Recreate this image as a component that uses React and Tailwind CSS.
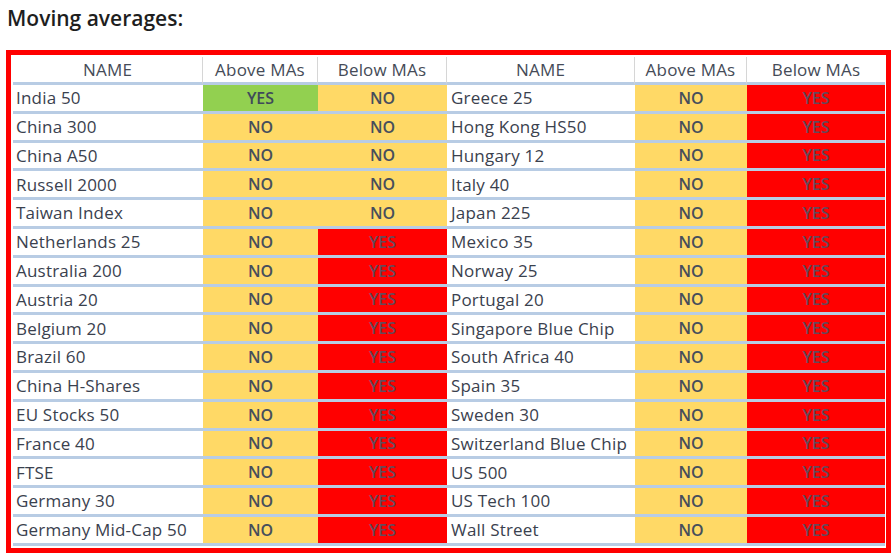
import React from 'react';

const left = [
  ['India 50', 'YES', 'NO'],
  ['China 300', 'NO', 'NO'],
  ['China A50', 'NO', 'NO'],
  ['Russell 2000', 'NO', 'NO'],
  ['Taiwan Index', 'NO', 'NO'],
  ['Netherlands 25', 'NO', 'YES'],
  ['Australia 200', 'NO', 'YES'],
  ['Austria 20', 'NO', 'YES'],
  ['Belgium 20', 'NO', 'YES'],
  ['Brazil 60', 'NO', 'YES'],
  ['China H-Shares', 'NO', 'YES'],
  ['EU Stocks 50', 'NO', 'YES'],
  ['France 40', 'NO', 'YES'],
  ['FTSE', 'NO', 'YES'],
  ['Germany 30', 'NO', 'YES'],
  ['Germany Mid-Cap 50', 'NO', 'YES'],
];

const right = [
  'Greece 25', 'Hong Kong HS50', 'Hungary 12', 'Italy 40', 'Japan 225', 'Mexico 35',
  'Norway 25', 'Portugal 20', 'Singapore Blue Chip', 'South Africa 40', 'Spain 35',
  'Sweden 30', 'Switzerland Blue Chip', 'US 500', 'US Tech 100', 'Wall Street',
];

const cell = "h-[28.8px] border-b-[3px] border-[#b8cce4] flex items-center";
const headCell = "h-[28px] border-b-[3px] border-[#b8cce4] border-r border-r-[#d6d6d6] flex items-center justify-center text-[17px] tracking-[0.2px] text-[#454b57] bg-white";
const nameCls = `${cell} text-[17px] tracking-[0.2px] text-[#3a414e] bg-white`;

// above MAs: YES -> green, NO -> yellow
const aboveCls = v => v === 'YES'
  ? `${cell} justify-center text-[16px] bg-[#92d050] font-semibold text-[#3f4a5a]`
  : `${cell} justify-center text-[16px] bg-[#ffd966] font-semibold text-[#464e5c]`;

// below MAs: YES -> red, NO -> yellow
const belowCls = v => v === 'YES'
  ? `${cell} justify-center text-[16px] bg-[#ff0000] font-semibold text-[#644a5c]`
  : `${cell} justify-center text-[16px] bg-[#ffd966] font-semibold text-[#464e5c]`;

const App = () => {
  return (
    <div className="w-[895px] h-[555px] bg-white font-['Open_Sans',sans-serif] overflow-hidden">
      <div className="pl-[7px] pt-[3px] h-[50px] text-[21px] font-semibold text-[#1e1e1e] leading-[30px]">
        Moving averages:
      </div>

      <div className="ml-[6px] w-[885px] border-[5px] border-[#ff0000] p-[2px] bg-white">
        <div className="grid grid-cols-[190px_115px_129px_188px_112px_138px]">
          <div className={headCell}>NAME</div>
          <div className={headCell}>Above MAs</div>
          <div className={headCell}>Below MAs</div>
          <div className={headCell}>NAME</div>
          <div className={headCell}>Above MAs</div>
          <div className={`${headCell} border-r-0`}>Below MAs</div>

          {left.map(([name, above, below], i) => (
            <React.Fragment key={name}>
              <div className={`${nameCls} pl-[3px]`}>{name}</div>
              <div className={aboveCls(above)}>{above}</div>
              <div className={belowCls(below)}>{below}</div>
              <div className={`${nameCls} pl-[4px]`}>{right[i]}</div>
              <div className={aboveCls('NO')}>NO</div>
              <div className={belowCls('YES')}>YES</div>
            </React.Fragment>
          ))}
        </div>
      </div>
    </div>
  );
};

export default App;
